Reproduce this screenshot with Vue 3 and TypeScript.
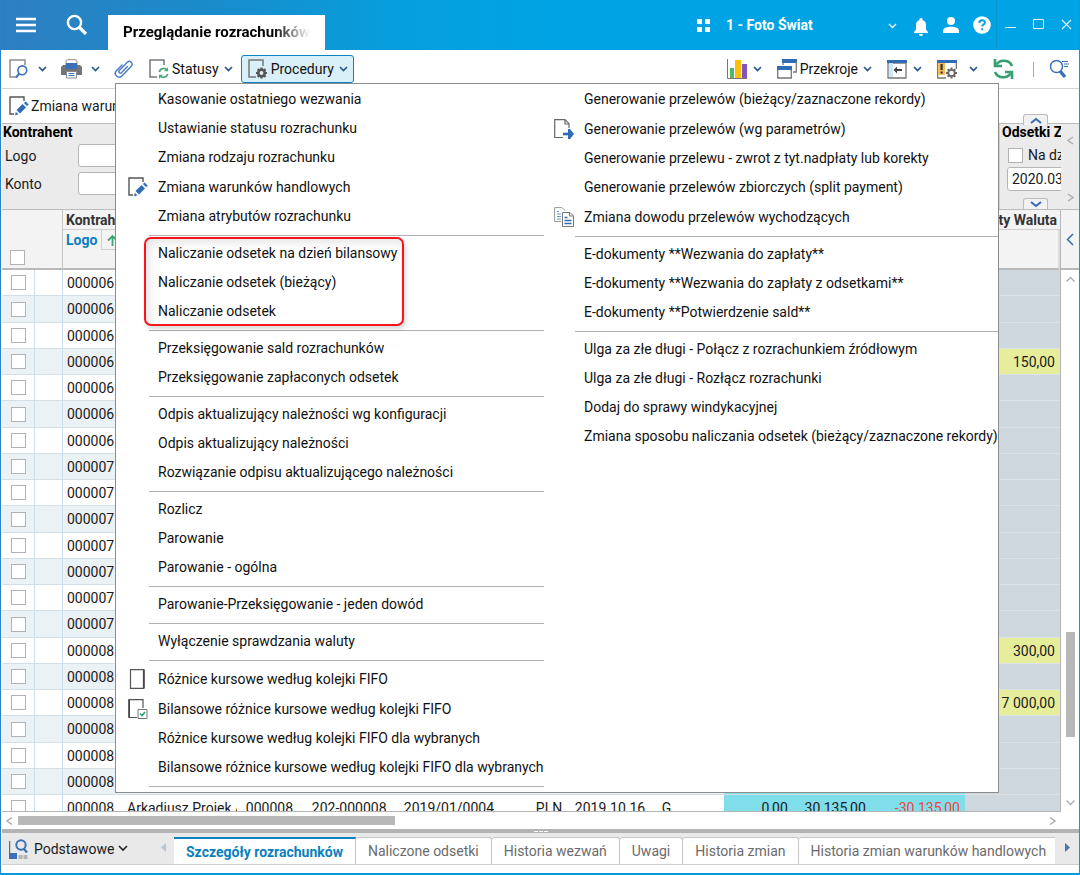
<script setup lang="ts">
import { ref } from 'vue'

interface MenuItem {
  label: string
  icon?: 'edit' | 'page' | 'check' | 'export' | 'copy'
}
interface MenuGroup {
  items: MenuItem[]
  marked?: boolean
}
interface Row {
  logo: string
  checked: boolean
  amount?: string
  name?: string
  code?: string
  account?: string
  doc?: string
  currency?: string
  date?: string
  kind?: string
  paid?: string
  total?: string
  balance?: string
}

const leftGroups: MenuGroup[] = [
  {
    items: [
      { label: 'Kasowanie ostatniego wezwania' },
      { label: 'Ustawianie statusu rozrachunku' },
      { label: 'Zmiana rodzaju rozrachunku' },
      { label: 'Zmiana warunków handlowych', icon: 'edit' },
      { label: 'Zmiana atrybutów rozrachunku' },
    ],
  },
  {
    marked: true,
    items: [
      { label: 'Naliczanie odsetek na dzień bilansowy' },
      { label: 'Naliczanie odsetek (bieżący)' },
      { label: 'Naliczanie odsetek' },
    ],
  },
  { items: [{ label: 'Przeksięgowanie sald rozrachunków' }, { label: 'Przeksięgowanie zapłaconych odsetek' }] },
  {
    items: [
      { label: 'Odpis aktualizujący należności wg konfiguracji' },
      { label: 'Odpis aktualizujący należności' },
      { label: 'Rozwiązanie odpisu aktualizującego należności' },
    ],
  },
  { items: [{ label: 'Rozlicz' }, { label: 'Parowanie' }, { label: 'Parowanie - ogólna' }] },
  { items: [{ label: 'Parowanie-Przeksięgowanie - jeden dowód' }] },
  { items: [{ label: 'Wyłączenie sprawdzania waluty' }] },
  {
    items: [
      { label: 'Różnice kursowe według kolejki FIFO', icon: 'page' },
      { label: 'Bilansowe różnice kursowe według kolejki FIFO', icon: 'check' },
      { label: 'Różnice kursowe według kolejki FIFO dla wybranych' },
      { label: 'Bilansowe różnice kursowe według kolejki FIFO dla wybranych' },
    ],
  },
]

const rightGroups: MenuGroup[] = [
  {
    items: [
      { label: 'Generowanie przelewów (bieżący/zaznaczone rekordy)' },
      { label: 'Generowanie przelewów (wg parametrów)', icon: 'export' },
      { label: 'Generowanie przelewu - zwrot z tyt.nadpłaty lub korekty' },
      { label: 'Generowanie przelewów zbiorczych (split payment)' },
      { label: 'Zmiana dowodu przelewów wychodzących', icon: 'copy' },
    ],
  },
  {
    items: [
      { label: 'E-dokumenty **Wezwania do zapłaty**' },
      { label: 'E-dokumenty **Wezwania do zapłaty z odsetkami**' },
      { label: 'E-dokumenty **Potwierdzenie sald**' },
    ],
  },
  {
    items: [
      { label: 'Ulga za złe długi - Połącz z rozrachunkiem źródłowym' },
      { label: 'Ulga za złe długi - Rozłącz rozrachunki' },
      { label: 'Dodaj do sprawy windykacyjnej' },
      { label: 'Zmiana sposobu naliczania odsetek (bieżący/zaznaczone rekordy)' },
    ],
  },
]
const columns = [leftGroups, rightGroups]

const amounts: Record<number, string> = { 3: '150,00', 14: '300,00', 16: '7 000,00' }
const rows = ref<Row[]>(
  Array.from({ length: 20 }, (_, i) => ({
    logo: i < 7 ? '000006' : i < 14 ? '000007' : '000008',
    checked: false,
    amount: amounts[i],
  })),
)
rows.value.push({
  logo: '000008',
  checked: false,
  name: 'Arkadiusz Projek Architekt',
  code: '000008',
  account: '202-000008',
  doc: '2019/01/0004',
  currency: 'PLN',
  date: '2019.10.16',
  kind: 'G',
  paid: '0,00',
  total: '30 135,00',
  balance: '-30 135,00',
})

const allChecked = ref(false)
const onDate = ref(false)
const logo = ref('')
const account = ref('')
const dueDate = ref('2020.03.31')
const tabs = [
  'Szczegóły rozrachunków',
  'Naliczone odsetki',
  'Historia wezwań',
  'Uwagi',
  'Historia zmian',
  'Historia zmian warunków handlowych',
]
const activeTab = ref(0)
</script>

<template>
  <div class="window">
    <header class="titlebar">
      <button class="hamburger" aria-label="Menu">
        <svg width="20" height="16" viewBox="0 0 20 16"><path d="M0 2h20M0 8h20M0 14h20" stroke="#fff" stroke-width="2.4" /></svg>
      </button>
      <button class="find" aria-label="Szukaj">
        <svg width="22" height="22" viewBox="0 0 22 22" fill="none" stroke="#fff"><circle cx="8.5" cy="8.5" r="6.6" stroke-width="2.4" /><path d="M13 13l7 7" stroke-width="3.2" /></svg>
      </button>
      <div class="doc-tab"><span>Przeglądanie rozrachunków</span></div>
      <div class="company">
        <svg width="13" height="13" viewBox="0 0 13 13" fill="#fff"><path d="M0 0h5v5H0zM8 0h5v5H8zM0 8h5v5H0zM8 8h5v5H8z" /></svg>
        <select aria-label="Firma"><option>1 - Foto Świat</option></select>
        <svg class="company-arrow" width="9" height="6" viewBox="0 0 9 6" fill="none" stroke="#fff" stroke-width="1.3"><path d="M1 1l3.5 3.5L8 1" /></svg>
      </div>
      <div class="account">
        <button class="bell" aria-label="Powiadomienia">
          <svg width="16" height="18" viewBox="0 0 16 18" fill="#fff"><path d="M8 0a1.500 1.500 0 0 0-1.400 2C4.200 2.600 3 4.500 3 7v4.500L1 14v1h14v-1l-2-2.500V7c0-2.500-1.200-4.400-3.600-5A1.500 1.500 0 0 0 8 0zM6 16h4a2 2 0 0 1-4 0z" /></svg>
        </button>
        <button aria-label="Użytkownik">
          <svg width="16" height="16" viewBox="0 0 16 16" fill="#fff"><circle cx="8" cy="4" r="4" /><path d="M0 16v-2c0-3 4-4.300 8-4.300s8 1.300 8 4.300v2z" /></svg>
        </button>
        <button aria-label="Pomoc">
          <svg width="18" height="18" viewBox="0 0 18 18"><circle cx="9" cy="9" r="8.800" fill="#fff" /><path d="M6.300 7c0-3.700 5.600-3.500 5.600-.4 0 2-2.700 2-2.700 4" fill="none" stroke="#00a2e1" stroke-width="1.900" /><path d="M8.200 12.300h2v2h-2z" fill="#00a2e1" /></svg>
        </button>
      </div>
      <div class="win-buttons">
        <button aria-label="Minimalizuj"><svg width="11" height="11" viewBox="0 0 11 11"><path d="M0 8.500h11" stroke="#e6f6fd" stroke-width="1" /></svg></button>
        <button aria-label="Maksymalizuj"><svg width="11" height="11" viewBox="0 0 11 11"><path d="M.5 .5h10v9H.5z" fill="none" stroke="#e6f6fd" /></svg></button>
        <button aria-label="Zamknij"><svg width="11" height="11" viewBox="0 0 11 11"><path d="M1 1l9 9M10 1l-9 9" stroke="#e6f6fd" stroke-width="1.100" /></svg></button>
      </div>
    </header>

    <div class="toolbar">
      <button class="tool" aria-label="Podgląd">
        <svg width="20" height="20" viewBox="0 0 20 20" fill="none"><path d="M16 6V1H1v17h6" stroke="#8d8d8d" stroke-width="1.500" /><circle cx="13.300" cy="11.300" r="4.400" stroke="#3c70b6" stroke-width="1.600" /><path d="M10.300 14.500L7 18.500" stroke="#3c70b6" stroke-width="2" /></svg>
        <svg class="chev wide" width="9" height="6" viewBox="0 0 9 6"><path d="M1 1l3.500 3.500L8 1" /></svg>
      </button>
      <button class="tool print" aria-label="Drukuj">
        <svg width="21" height="20" viewBox="0 0 21 20"><path d="M2 6h17l2 2v8H0V8z" fill="#747474" /><path d="M5 6V2.500Q5 .7 6.800 .7h7.400Q16 .7 16 2.500V6z" fill="#fff" stroke="#8a8a8a" /><path d="M5 4h11v6H5z" fill="#3c70b6" /><path d="M5.500 12.500h10v6.500h-10z" fill="#fff" stroke="#8a8a8a" /><path d="M7.500 14.500h6M7.500 16.500h6" stroke="#3c70b6" /></svg>
        <svg class="chev wide" width="9" height="6" viewBox="0 0 9 6"><path d="M1 1l3.500 3.500L8 1" /></svg>
      </button>
      <button class="tool clip" aria-label="Załączniki">
        <svg width="20" height="20" viewBox="0 0 20 20" fill="none" stroke="#4a7cc0" stroke-width="1.400" stroke-linecap="round"><path d="M13.500 7.500L7.500 13.700c-1.400 1.500-3.500-.6-2.200-2.200L13.300 3.300c2.700-2.600 6.500.9 4 3.900L8 17c-3.800 3.500-9-1.500-5.600-5.300L8 6" /></svg>
      </button>
      <button class="tool">
        <svg width="20" height="20" viewBox="0 0 20 20" fill="none"><path d="M15 6V1H1v17h7" stroke="#777" stroke-width="1.500" /><path d="M10.300 13c.8-4 5.700-4.600 7.500-1.800M18.700 15c-.8 3.500-5.500 4.400-7.500 1.800" stroke="#49a97c" stroke-width="1.700" /><path d="M19 8.300v4h-4zM10 19.800v-4h4z" fill="#49a97c" /></svg>
        <span class="tool-label">Statusy</span>
        <svg class="chev" width="9" height="6" viewBox="0 0 9 6"><path d="M1 1l3.500 3.500L8 1" /></svg>
      </button>
      <button class="tool open">
        <svg width="20" height="20" viewBox="0 0 20 20" fill="none"><path d="M15 7V1H1v17h7" stroke="#777" stroke-width="1.500" /><circle cx="13.500" cy="14" r="3.200" stroke="#555" stroke-width="2.600" /><path d="M13.500 8.500v2M13.500 17.500v2M8 14h2M17 14h2M9.600 10.100l1.500 1.500M16 16.400l1.500 1.500M9.600 17.900l1.500-1.500M16 11.600l1.500-1.500" stroke="#555" stroke-width="2.200" /></svg>
        <span class="tool-label">Procedury</span>
        <svg class="chev" width="9" height="6" viewBox="0 0 9 6"><path d="M1 1l3.500 3.500L8 1" /></svg>
      </button>

      <div class="tools-right">
        <button class="tool" aria-label="Wykresy">
          <svg width="20" height="20" viewBox="0 0 20 20"><path d="M3 9h4v10H3z" fill="#55b867" /><path d="M8 1h6v18H8z" fill="#fdc006" /><path d="M15 5h5v14h-5z" fill="#8155bd" /><path d="M.5 0v19.500H20" fill="none" stroke="#777" /></svg>
          <svg class="chev" width="9" height="6" viewBox="0 0 9 6"><path d="M1 1l3.500 3.500L8 1" /></svg>
        </button>
        <button class="tool sections">
          <svg width="20" height="20" viewBox="0 0 20 20"><path d="M5 0h15v4H5zM0 7h15v4H0z" fill="#2f6cb5" /><path d="M6 4v2M16 13h3.300V3M.7 11v8h13.600v-8" fill="none" stroke="#777" stroke-width="1.300" /></svg>
          <span class="tool-label">Przekroje</span>
          <svg class="chev" width="9" height="6" viewBox="0 0 9 6"><path d="M1 1l3.500 3.500L8 1" /></svg>
        </button>
        <button class="tool" aria-label="Panel">
          <svg width="20" height="20" viewBox="0 0 20 20"><path d="M1 4h18v15H1z" fill="#fff" stroke="#777" stroke-width="1.300" /><path d="M2 4h4v14H2z" fill="#cfe6f7" /><path d="M0 1h20v3H0z" fill="#2f6cb5" /><path d="M8 11h7" stroke="#444" stroke-width="2" /><path d="M6.500 11L10 7.500v7z" fill="#444" /></svg>
          <svg class="chev" width="9" height="6" viewBox="0 0 9 6"><path d="M1 1l3.500 3.500L8 1" /></svg>
        </button>
        <button class="tool alerts" aria-label="Ostrzeżenia">
          <svg width="20" height="20" viewBox="0 0 20 20"><path d="M.7 4v15H9M19.300 4v6" fill="none" stroke="#777" stroke-width="1.300" /><path d="M0 1h20v3H0z" fill="#2f6cb5" /><path d="M1 4h7v12H1z" fill="#f3bd58" /><path d="M3.500 5h2.200v6H3.500zM3.500 12.500h2.200v2H3.500z" fill="#333" /><circle cx="14.500" cy="14" r="3.200" fill="none" stroke="#666" stroke-width="1.800" /><path d="M14.500 8.500v2M14.500 17.500v2M9 14h2M18 14h2M10.700 10.200l1.300 1.300M17 16.500l1.300 1.300M10.700 17.800l1.300-1.300M17 11.500l1.300-1.300" stroke="#666" stroke-width="2" /></svg>
          <svg class="chev" width="9" height="6" viewBox="0 0 9 6"><path d="M1 1l3.500 3.500L8 1" /></svg>
        </button>
        <button class="tool refresh" aria-label="Odśwież">
          <svg width="21" height="20" viewBox="0 0 21 20" fill="none" stroke="#34a070" stroke-width="2.600"><path d="M19 7C16.500.8 7.500-.2 3.500 5.500M2 13c2.500 6.200 11.500 7.200 15.500 1.500" /><path d="M2 0v7h7M19 20v-7h-7" /></svg>
        </button>
        <span class="divider"></span>
        <button class="tool" aria-label="Szukaj w liście">
          <svg width="21" height="20" viewBox="0 0 21 20" fill="none" stroke="#3c70b6"><circle cx="7.500" cy="7.500" r="6" stroke-width="1.500" /><path d="M11 12l5 6" stroke-width="3.400" /><path d="M13 2.500h6M15 5h5M15 7.500h4" stroke-width="1.200" /></svg>
        </button>
      </div>

      <div class="menu" role="menu">
        <div v-for="(groups, c) in columns" :key="c" class="menu-col">
          <div v-for="(group, g) in groups" :key="g" class="group" :class="{ marked: group.marked, ruled: c === 0 || g < groups.length - 1 }">
            <button v-for="item in group.items" :key="item.label" role="menuitem" class="item" :class="{ 'with-icon': item.icon }">
              <span class="item-icon">
                <svg v-if="item.icon === 'edit'" width="20" height="20" viewBox="0 0 20 20"><path d="M15 5V1H1v17h4" fill="none" stroke="#555" stroke-width="1.400" /><path d="M7.500 14l6-6 3.500 3.500-6 6z" fill="#2f6cb5" /><path d="M14.500 7l2-2 3.500 3.500-2 2zM6.500 15l3.500 3.500-4.500 1.500z" fill="#2f6cb5" stroke="#fff" stroke-width=".8" /></svg>
                <svg v-else-if="item.icon === 'page'" width="20" height="20" viewBox="0 0 20 20"><path d="M2.500 .6h13v18.800h-13z" fill="#fff" stroke="#555" stroke-width="1.200" /><path d="M16 .5v19" stroke="#444" stroke-width="1.600" /></svg>
                <svg v-else-if="item.icon === 'check'" width="20" height="20" viewBox="0 0 20 20" fill="none"><path d="M9 18.500H1V.7h14V9" stroke="#555" stroke-width="1.200" /><path d="M1.200 .5v18" stroke="#444" stroke-width="1.600" /><path d="M10 10.500h9v9h-9z" fill="#fff" stroke="#777" /><path d="M12 14.500l2 2 3-3.500" stroke="#25a36c" stroke-width="1.600" /></svg>
                <svg v-else-if="item.icon === 'export'" width="20" height="20" viewBox="0 0 20 20" fill="none"><path d="M9 18.500H.7V.7H11l4 4V9M11 .7V5h4" stroke="#666" stroke-width="1.200" /><path d="M9 15h8" stroke="#2f6cb5" stroke-width="2.600" /><path d="M14 10h2l4 5-4 5h-2z" fill="#2f6cb5" /></svg>
                <svg v-else-if="item.icon === 'copy'" width="20" height="20" viewBox="0 0 20 20" fill="none"><path d="M7 14.500H.6V.6H8l3 3" stroke="#999" /><path d="M3 4.500h2M3 7h4M3 9.500h4M3 12h4" stroke="#5d92cb" /><path d="M8.500 5.500H16l3.500 3.500v10.500h-11z" fill="#fff" stroke="#777" /><path d="M15.500 5.500V9h4" stroke="#777" /><path d="M10.500 10.500h3M10.500 13.500h7M10.500 16.500h7" stroke="#2f6cb5" stroke-width="1.400" /></svg>
              </span>
              {{ item.label }}
            </button>
          </div>
        </div>
      </div>
    </div>

    <div class="quickbar">
      <button class="quick">
        <svg width="20" height="20" viewBox="0 0 20 20"><path d="M15 5V1H1v17h4" fill="none" stroke="#555" stroke-width="1.400" /><path d="M7.500 14l6-6 3.500 3.500-6 6z" fill="#2f6cb5" /><path d="M14.500 7l2-2 3.500 3.500-2 2zM6.500 15l3.500 3.500-4.500 1.500z" fill="#2f6cb5" stroke="#fff" stroke-width=".8" /></svg>
        <span>Zmiana warunków</span>
      </button>
    </div>

    <section class="filters">
      <div class="filter-left">
        <h2>Kontrahent</h2>
        <div class="field"><label for="f-logo">Logo</label><input id="f-logo" v-model="logo" type="text" /></div>
        <div class="field"><label for="f-konto">Konto</label><input id="f-konto" v-model="account" type="text" /></div>
      </div>
      <div class="filter-right">
        <h2>Odsetki Z</h2>
        <label class="on-date"><input v-model="onDate" type="checkbox" />Na dzień</label>
        <input v-model="dueDate" class="date" type="text" aria-label="Data odsetek" />
      </div>
      <div class="filter-scroll">
        <svg width="7" height="9" viewBox="0 0 7 9"><path d="M6 1L1 4.500L6 8" /></svg>
        <svg width="7" height="9" viewBox="0 0 7 9"><path d="M1 1l5 3.500L1 8" /></svg>
      </div>
      <button class="fold up" aria-label="Zwiń"><svg width="12" height="7" viewBox="0 0 12 7"><path d="M1 6l5-4 5 4" /></svg></button>
      <button class="fold down" aria-label="Rozwiń"><svg width="12" height="7" viewBox="0 0 12 7"><path d="M1 1l5 4 5-4" /></svg></button>
    </section>

    <div class="grid-area">
      <div class="grid-clip">
        <table>
          <colgroup>
            <col class="c-check" /><col class="c-mark" /><col class="c-logo" /><col /><col class="c-code" /><col class="c-acc" /><col class="c-doc" /><col class="c-cur" /><col class="c-date" /><col class="c-kind" /><col class="c-paid" /><col class="c-total" /><col class="c-bal" /><col class="c-amount" />
          </colgroup>
          <thead>
            <tr class="h1">
              <th rowspan="2" colspan="2" class="h-check"><input v-model="allChecked" type="checkbox" aria-label="Zaznacz wszystkie" /></th>
              <th colspan="11" class="h-group">Kontrahent</th>
              <th class="h-amount">Kwoty Waluta</th>
            </tr>
            <tr class="h2">
              <th colspan="11" class="h-logo"><span class="sort-name">Logo</span><span class="sort"><svg width="11" height="12" viewBox="0 0 11 12" fill="none" stroke="#3fa577" stroke-width="1.800"><path d="M5.500 12V2M1 6.500L5.500 2L10 6.500" /></svg></span></th>
              <th class="h-end"></th>
            </tr>
          </thead>
          <tbody>
            <tr v-for="(row, i) in rows" :key="i">
              <td class="check"><input v-model="row.checked" type="checkbox" :aria-label="'Zaznacz ' + row.logo" /></td>
              <td class="mark"></td>
              <td>{{ row.logo }}</td>
              <td><div class="name">{{ row.name }}</div></td>
              <td>{{ row.code }}</td>
              <td>{{ row.account }}</td>
              <td>{{ row.doc }}</td>
              <td>{{ row.currency }}</td>
              <td>{{ row.date }}</td>
              <td>{{ row.kind }}</td>
              <td class="num cyan">{{ row.paid }}</td>
              <td class="num cyan">{{ row.total }}</td>
              <td class="num cyan red">{{ row.balance }}</td>
              <td class="num amount" :class="{ lime: row.amount }">{{ row.amount }}</td>
            </tr>
          </tbody>
        </table>
      </div>
      <div class="vside">
        <button class="expand" aria-label="Rozwiń panel"><svg width="8" height="13" viewBox="0 0 8 13" fill="none" stroke="#2f6cb5" stroke-width="1.500"><path d="M7 1L1.500 6.500L7 12" /></svg></button>
        <div class="vscroll">
          <svg width="9" height="6" viewBox="0 0 9 6"><path d="M.5 5.500l4-4 4 4" /></svg>
          <div class="vthumb"></div>
          <svg width="9" height="6" viewBox="0 0 9 6"><path d="M.5 .5l4 4 4-4" /></svg>
        </div>
      </div>
    </div>

    <div class="hscroll">
      <svg width="7" height="8" viewBox="0 0 7 8"><path d="M6 .5L1 4l5 3.500" /></svg>
      <div class="htrack"><div class="hthumb"></div></div>
      <svg width="7" height="8" viewBox="0 0 7 8"><path d="M1 .5L6 4L1 7.500" /></svg>
    </div>
    <div class="splitter"><i></i><i></i><i></i></div>

    <footer class="bottom">
      <div class="view">
        <svg width="19" height="20" viewBox="0 0 19 20"><path d="M.6 2v17" stroke="#3c70b6" stroke-width="1.200" /><path d="M0 14h8v6H0z" fill="#3c70b6" /><path d="M9.500 16h4v4h-4zM14.500 16h4v4h-4z" fill="#b4b4b4" /><circle cx="12" cy="6" r="4.700" fill="none" stroke="#3c70b6" stroke-width="2" /><path d="M15 10l3 3.500" stroke="#3c70b6" stroke-width="2.200" /></svg>
        <select aria-label="Widok"><option>Podstawowe</option></select>
        <svg class="view-arrow" width="10" height="7" viewBox="0 0 10 7" fill="none" stroke="#222" stroke-width="1.600"><path d="M1 1l4 4 4-4" /></svg>
      </div>
      <button class="nav prev" aria-label="Poprzednie"><svg width="5" height="9" viewBox="0 0 5 9"><path d="M5 0v9L0 4.500z" fill="#b9c6d3" /></svg></button>
      <nav class="tabs">
        <button v-for="(tab, i) in tabs" :key="tab" class="tab" :class="{ active: i === activeTab }" @click="activeTab = i">{{ tab }}</button>
        <span class="tab-rest"></span>
      </nav>
      <button class="nav next" aria-label="Następne"><svg width="5" height="9" viewBox="0 0 5 9"><path d="M0 0v9l5-4.500z" fill="#4d76a3" /></svg></button>
    </footer>
  </div>
</template>

<style>
html,
body {
  margin: 0;
  background: #fff;
}
</style>

<style scoped>
*,
*::before,
*::after {
  box-sizing: border-box;
}
.window {
  display: flex;
  flex-direction: column;
  height: 100vh;
  min-height: 800px;
  padding: 0 0 8px 1px;
  overflow: hidden;
  border: solid #0a9bdb;
  border-width: 0 1px 2px 1px;
  border-left-color: #2b83c6;
  background: #fff;
  color: #1a1a1a;
  font-family: Roboto, "Liberation Sans", sans-serif;
  font-size: 14px;
}
button,
input,
select {
  margin: 0;
  font: inherit;
  color: inherit;
}
button {
  padding: 0;
  border: 0;
  background: none;
  display: flex;
  align-items: center;
}
svg {
  display: block;
  flex: none;
}
input[type="checkbox"] {
  appearance: none;
  display: block;
  width: 15px;
  height: 15px;
  border: 1px solid #b2b2b2;
  background: #fff;
}
input[type="checkbox"]:checked {
  background: #2f6cb5;
}
h2 {
  margin: 0;
  font-size: 14px;
  line-height: 16px;
  font-weight: 700;
  color: #000;
}
select {
  appearance: none;
  border: 0;
  background: none;
  padding: 0;
}

/* title bar */
.titlebar {
  flex: none;
  display: flex;
  align-items: center;
  height: 50px;
  margin-left: -1px;
  background: linear-gradient(90deg, #2e7fc1 0, #1a8bca 200px, #069fde 400px, #00a4e4 560px);
}
.hamburger {
  margin-left: 15px;
}
.find {
  margin-left: 30px;
  width: 22px;
}
.doc-tab {
  align-self: flex-end;
  width: 217px;
  height: 35px;
  margin-left: 20px;
  padding: 0 15px;
  background: #fff;
  color: #000;
  font-size: 15px;
  font-weight: 700;
  line-height: 34px;
}
.doc-tab span {
  display: block;
  overflow: hidden;
  white-space: nowrap;
  mask-image: linear-gradient(90deg, #000 150px, transparent 187px);
}
.company {
  display: flex;
  align-items: center;
  width: 200px;
  margin-left: auto;
}
.company select {
  flex: 1;
  margin-left: 16px;
  color: #fff;
  font-weight: 700;
}
.company-arrow {
  margin-top: 2px;
}
.account {
  display: flex;
  align-items: center;
  gap: 14px;
  margin-left: 16px;
}
.bell {
  padding-top: 4px;
}
.win-buttons {
  display: flex;
  align-items: center;
  gap: 17px;
  height: 50px;
  margin-left: 5px;
  padding: 0 7px 2px 8px;
  border-left: 1px solid #0c94cc;
}

/* toolbar */
.toolbar {
  position: relative;
  flex: none;
  display: flex;
  align-items: center;
  height: 39px;
  padding-left: 7px;
  border-bottom: 1px solid #d4d4d4;
}
.tool {
  height: 28px;
  color: #111;
}
.chev {
  margin-left: 6px;
  fill: none;
  stroke: #28548c;
  stroke-width: 1.6;
}
.chev.wide {
  margin-left: 9px;
}
.tool-label {
  margin-left: 3px;
}
.tool-label + .chev {
  margin-left: 5px;
}
.print {
  margin-left: 14px;
}
.clip {
  margin: 0 15px 0 14px;
}
.open {
  margin-left: 8px;
  padding: 0 5px 0 6px;
  border: 1px solid #0e83c4;
  border-radius: 3px;
  background: #d9f0f9;
}
.tools-right {
  display: flex;
  align-items: center;
  gap: 15px;
  margin-left: auto;
  padding-right: 9px;
}
.alerts .chev {
  margin-left: 12px;
}
.divider {
  width: 1px;
  height: 15px;
  margin-left: 4px;
  background: #aaa;
}

/* drop-down menu */
.menu {
  position: absolute;
  z-index: 5;
  top: 33px;
  left: 113px;
  display: flex;
  width: 884px;
  padding: 1px 0 2px;
  border: 1px solid #8c8c8c;
  background: #fff;
  color: #111;
}
.menu-col {
  flex: 1;
}
.menu-col:first-child {
  flex: 0 0 428px;
  padding-left: 2px;
}
.group {
  position: relative;
}
.ruled {
  padding-bottom: 8px;
}
.ruled::before {
  content: "";
  position: absolute;
  right: 0;
  bottom: 3px;
  left: 31px;
  height: 1px;
  background: #b2b2b2;
}
.marked::after {
  content: "";
  position: absolute;
  top: -2px;
  left: 26px;
  width: 260px;
  height: 89px;
  border: 2px solid #f8141a;
  border-radius: 7px;
  box-shadow: inset 4px 4px 8px rgba(0, 0, 0, 0.1), 2px 3px 4px rgba(0, 0, 0, 0.15);
  pointer-events: none;
}
.item {
  width: 100%;
  height: 29px;
  padding-bottom: 2px;
  white-space: nowrap;
}
.with-icon {
  height: 30px;
  padding-bottom: 0;
}
.item-icon {
  width: 30px;
  flex: none;
  margin-left: 10px;
}

/* quick bar */
.quickbar {
  flex: none;
  display: flex;
  align-items: center;
  height: 35px;
  padding-left: 7px;
  border-bottom: 1px solid #bcbcbc;
}
.quick {
  gap: 2px;
  white-space: nowrap;
}

/* filters */
.filters {
  position: relative;
  flex: none;
  display: flex;
  height: 86px;
  border-bottom: 1px solid #bcbcbc;
  background: #ebebeb;
}
.filter-left {
  flex: 1;
}
.filter-left h2 {
  margin: 0 0 4px 1px;
}
.field {
  display: flex;
  align-items: center;
  height: 23px;
  margin-bottom: 5px;
}
.field label {
  width: 76px;
  padding-left: 3px;
}
.field input {
  width: 150px;
  height: 23px;
  border: 1px solid #b5b5b5;
  border-radius: 3px;
}
.filter-right {
  width: 62px;
  padding: 0 0 0 2px;
  overflow: hidden;
  border-left: 1px solid #cfcfcf;
  white-space: nowrap;
}
.on-date {
  display: flex;
  gap: 5px;
  align-items: center;
  height: 16px;
  margin: 7px 0 4px 6px;
}
.on-date input {
  flex: none;
}
.date {
  width: 100px;
  height: 24px;
  margin-left: 5px;
  padding: 0 4px;
  border: 1px solid #b5b5b5;
  border-radius: 3px;
  background: #fff;
}
.filter-scroll {
  display: flex;
  flex-direction: column;
  justify-content: space-between;
  align-items: center;
  width: 18px;
  padding: 12px 0 7px;
}
.filter-scroll svg,
.vscroll svg,
.hscroll svg {
  fill: none;
  stroke: #adadad;
  stroke-width: 1.4;
}
.fold {
  position: absolute;
  right: 31px;
  justify-content: center;
  width: 25px;
  height: 11px;
  border: 1px solid #bcbcbc;
  background: #f2f2f2;
}
.fold svg {
  fill: none;
  stroke: #2f6cb5;
  stroke-width: 2;
}
.up {
  top: -10px;
  border-bottom: 0;
  border-radius: 3px 3px 0 0;
}
.down {
  bottom: 0;
  border-bottom: 0;
  border-radius: 3px 3px 0 0;
}

/* grid */
.grid-area {
  display: flex;
  flex: 1;
  min-height: 0;
}
.grid-clip {
  flex: 1;
  overflow: hidden;
  border: solid #b5b5b5;
  border-width: 0 1px 1px 0;
}
table {
  width: 100%;
  table-layout: fixed;
  border-collapse: separate;
  border-spacing: 0;
}
.c-check { width: 33px; }
.c-mark { width: 28px; }
.c-logo { width: 60px; }
.c-code { width: 66px; }
.c-acc { width: 92px; }
.c-doc { width: 132px; }
.c-cur { width: 39px; }
.c-date { width: 87px; }
.c-kind { width: 66px; }
.c-paid { width: 69px; }
.c-total { width: 78px; }
.c-bal { width: 94px; }
.c-amount { width: 95px; }
th {
  padding: 0 3px;
  background: #f3f3f3;
  color: #333;
  font-weight: 700;
  text-align: left;
  white-space: nowrap;
}
.h1 th {
  height: 20px;
  line-height: 18px;
}
.h2 th {
  height: 40px;
}
.h1 .h-check {
  padding: 0 0 3px 8px;
  border-right: 1px solid #c6c6c6;
  border-bottom: 2px solid #b9b9b9;
  vertical-align: bottom;
}
.h1 .h-group,
.h1 .h-amount {
  border-bottom: 1px solid #cfcfcf;
}
.h1 .h-amount {
  text-align: right;
}
.h2 th {
  border-bottom: 2px solid #b9b9b9;
  vertical-align: top;
}
.sort-name {
  display: inline-block;
  width: 35px;
  line-height: 20px;
  color: #0b7fbd;
}
.sort {
  display: inline-block;
  width: 22px;
  height: 20px;
  padding: 4px 0 0 5px;
  border: solid #cfcfcf;
  border-width: 0 1px 1px;
  vertical-align: top;
}
.h-end {
  border-right: 2px solid #dcdcdc;
}
td {
  height: 26px;
  padding: 0 5px 0 4px;
  overflow: hidden;
  border-bottom: 1px solid #d3dfe6;
  white-space: nowrap;
}
.name {
  overflow: hidden;
}
tbody tr:nth-child(4n + 2) td {
  height: 27px;
}
tbody tr:nth-child(even) td {
  background: #eaf2f6;
}
tbody .check {
  padding: 0 0 0 9px;
  border-right: 1px solid #c9e0f1;
}
tbody .mark {
  border-right: 1px solid #c9e0f1;
}
td.num {
  text-align: right;
}
tbody tr td.cyan {
  background: #80deea;
}
td.red {
  color: #f44336;
}
tbody tr td.amount {
  border-bottom-color: #dde2e6;
  background: #cfd8df;
}
tbody tr td.lime {
  background: #e6ee9c;
}
.vside {
  display: flex;
  flex-direction: column;
  width: 18px;
}
.expand {
  flex: none;
  justify-content: center;
  height: 60px;
  border-bottom: 2px solid #b9b9b9;
  background: #f3f3f3;
}
.vscroll {
  flex: 1;
  display: flex;
  flex-direction: column;
  align-items: center;
  justify-content: flex-end;
  padding: 6px 0;
}
.vscroll svg:first-child {
  margin-bottom: auto;
}
.vthumb {
  width: 9px;
  height: 105px;
  margin-bottom: 63px;
  background: #b8b8b8;
}
.hscroll {
  flex: none;
  display: flex;
  align-items: center;
  gap: 5px;
  height: 17px;
  padding: 0 23px 0 4px;
}
.htrack {
  flex: 1;
}
.hthumb {
  width: 377px;
  height: 9px;
  background: #b8b8b8;
}
.splitter {
  flex: none;
  display: flex;
  justify-content: center;
  align-items: center;
  gap: 1px;
  height: 4px;
  background: #b3b3b3;
}
.splitter i {
  width: 4px;
  height: 1px;
  background: #fff;
}

/* bottom bar */
.bottom {
  flex: none;
  display: flex;
  height: 32px;
  border-bottom: 1px solid #d0d0d0;
  background: #e9e9e9;
}
.view {
  display: flex;
  align-items: center;
  width: 150px;
  padding-left: 7px;
}
.view select {
  width: 84px;
  margin-left: 6px;
}
.nav {
  flex: none;
  justify-content: center;
  width: 22px;
  height: 28px;
}
.nav.next {
  width: 24px;
}
.tabs {
  display: flex;
  flex: 1;
  align-items: flex-end;
  overflow: hidden;
}
.tab,
.tab-rest {
  flex: none;
  height: 27px;
  border: solid #c6c6c6;
  border-width: 1px 1px 0 0;
  border-radius: 3px 3px 0 0;
  background: #fff;
}
.tab {
  padding: 0 12px;
  color: #6b6b6b;
  white-space: nowrap;
}
.tab.active {
  border-top: 2px solid #0b7fbd;
  border-radius: 0;
  color: #0b7fbd;
  font-weight: 700;
}
.tab-rest {
  width: 30px;
}
</style>
